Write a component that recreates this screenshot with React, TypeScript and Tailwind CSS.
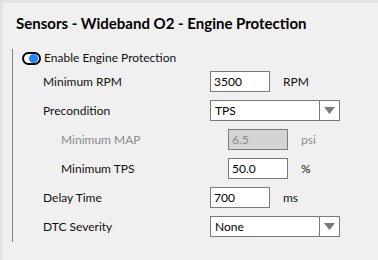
import type { ReactNode } from "react";

function Toggle() {
  return (
    <svg width="19" height="13" viewBox="0 0 19 13" className="shrink-0">
      <rect x="1" y="1" width="17" height="11" rx="5.5" fill="#fff" stroke="#000" strokeWidth="2" />
      <circle cx="11.5" cy="6.5" r="4.6" fill="#1e88f5" />
    </svg>
  );
}

function Caret() {
  return (
    <svg width="11" height="7" viewBox="0 0 11 7">
      <path d="M0 0h11L5.5 7z" fill="#7a7a7a" />
    </svg>
  );
}

function Field({ value, disabled }: { value: string; disabled?: boolean }) {
  return (
    <div
      className={`w-[60px] h-[21px] border border-[#7a7a7a] flex items-center pl-[3px] ${
        disabled ? "bg-[#d4d4d4] text-[#8a8a8a]" : "bg-white text-black"
      }`}
    >
      {value}
    </div>
  );
}

function Select({ value }: { value: string }) {
  return (
    <div className="w-[130px] h-[21px] border border-[#7a7a7a] bg-white flex">
      <div className="flex-1 flex items-center pl-[4px] text-black">{value}</div>
      <div className="w-[20px] border-l border-[#7a7a7a] flex items-center justify-center">
        <Caret />
      </div>
    </div>
  );
}

function Row({
  label,
  sub,
  disabled,
  children,
}: {
  label: string;
  sub?: boolean;
  disabled?: boolean;
  children: ReactNode;
}) {
  return (
    <div className={`flex items-center h-[21px] ${sub ? "pl-[18px]" : ""}`}>
      <span className={`w-[167px] shrink-0 ${disabled ? "text-[#8a8a8a]" : "text-[#111]"}`}>{label}</span>
      {children}
    </div>
  );
}

function Unit({ text, disabled }: { text: string; disabled?: boolean }) {
  return <span className={`ml-[13px] ${disabled ? "text-[#8a8a8a]" : "text-[#111]"}`}>{text}</span>;
}

export default function App() {
  return (
    <div className="w-[378px] h-[260px] overflow-hidden bg-[#f0f0f0] border-t-[3px] border-l-[3px] border-[#e3e3e3] font-['Lato',sans-serif] text-[12px] leading-[16px]">
      <h1 className="pl-[13px] pt-[10px] text-[15px] leading-[20px] font-bold text-black">
        Sensors - Wideband O2 - Engine Protection
      </h1>
      <div className="ml-[9px] mt-[16px] border-l border-[#7f7f7f] pl-[9px] pt-[1px] pb-[5px]">
        <div className="flex items-center h-[16px] gap-[3px]">
          <Toggle />
          <span className="text-[#111]">Enable Engine Protection</span>
        </div>
        <div className="pl-[21px] mt-[5px] flex flex-col gap-[8px]">
          <Row label="Minimum RPM">
            <Field value="3500" />
            <Unit text="RPM" />
          </Row>
          <Row label="Precondition">
            <Select value="TPS" />
          </Row>
          <Row label="Minimum MAP" sub disabled>
            <Field value="6.5" disabled />
            <Unit text="psi" disabled />
          </Row>
          <Row label="Minimum TPS" sub>
            <Field value="50.0" />
            <Unit text="%" />
          </Row>
          <Row label="Delay Time">
            <Field value="700" />
            <Unit text="ms" />
          </Row>
          <Row label="DTC Severity">
            <Select value="None" />
          </Row>
        </div>
      </div>
    </div>
  );
}
